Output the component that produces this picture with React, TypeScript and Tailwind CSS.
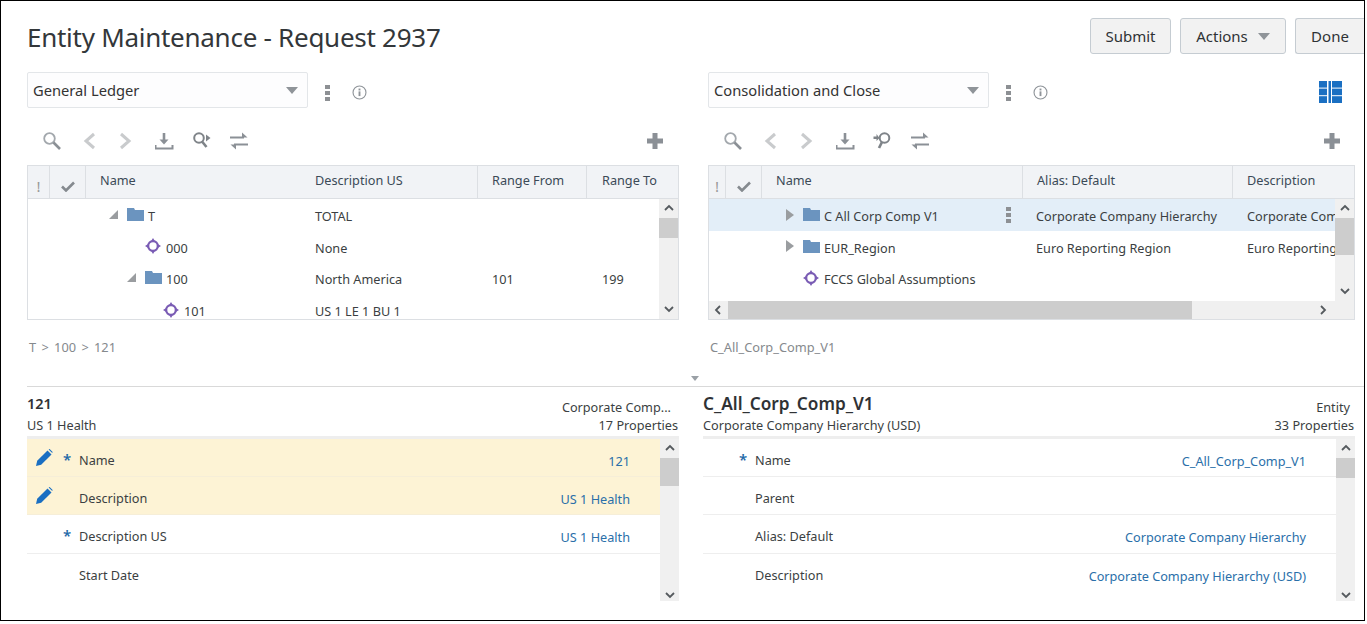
import React from "react";

const G = "#8b9096";

function Search() {
  return (
    <svg width="20" height="20" viewBox="0 0 20 20" fill="none">
      <circle cx="7.5" cy="7.5" r="5.3" stroke="#a3a8ad" strokeWidth="1.8" />
      <path d="M11.5 11.5L18 18" stroke={G} strokeWidth="2.6" />
    </svg>
  );
}
function Chev({ right }: { right?: boolean }) {
  return (
    <svg width="20" height="20" viewBox="0 0 20 20" fill="none">
      <path d={right ? "M4 3l8 7-8 7" : "M14 3l-8 7 8 7"} stroke="#c9cbcd" strokeWidth="3" />
    </svg>
  );
}
function Download() {
  return (
    <svg width="20" height="20" viewBox="0 0 20 20" fill="none">
      <path d="M9 2v8" stroke={G} strokeWidth="2.6" />
      <path d="M4.5 8.5h9L9 13.5z" fill={G} />
      <path d="M0.5 14v3.5h17V14" stroke={G} strokeWidth="2" />
    </svg>
  );
}
function SearchArrow({ flip }: { flip?: boolean }) {
  return (
    <svg width="20" height="20" viewBox="0 0 20 20" fill="none">
      {flip ? (
        <>
          <circle cx="11.5" cy="7" r="4.8" stroke="#7f8489" strokeWidth="2" />
          <path d="M9 11l-3 6" stroke="#7f8489" strokeWidth="2.6" />
          <path d="M0.5 5.5h3V3l3 4-3 3V8h-3z" fill="#7f8489" />
        </>
      ) : (
        <>
          <circle cx="7" cy="7" r="4.8" stroke="#7f8489" strokeWidth="2" />
          <path d="M10 10.5l4.5 5.5" stroke="#7f8489" strokeWidth="2.6" />
          <path d="M14 3.5l4.5 3.5-4.5 3.5z" fill="#7f8489" />
        </>
      )}
    </svg>
  );
}
function Swap() {
  return (
    <svg width="20" height="20" viewBox="0 0 20 20" fill="none">
      <path d="M0 6.5h14" stroke={G} strokeWidth="2" />
      <path d="M12 1.5l5.5 5H12z" fill={G} />
      <path d="M18 13.5H4" stroke={G} strokeWidth="2" />
      <path d="M6 18.5l-5.5-5H6z" fill={G} />
    </svg>
  );
}
function Plus() {
  return (
    <svg width="20" height="20" viewBox="0 0 20 20" fill="none">
      <path d="M10 2v16M2 10h16" stroke={G} strokeWidth="5" />
    </svg>
  );
}
function Kebab() {
  return (
    <svg width="5" height="16" viewBox="0 0 5 16" fill="#8d9094">
      <rect y="0" width="5" height="4" />
      <rect y="6" width="5" height="4" />
      <rect y="12" width="5" height="4" />
    </svg>
  );
}
function Info() {
  return (
    <svg width="15" height="15" viewBox="0 0 16 16" fill="none">
      <circle cx="8" cy="8" r="6.9" stroke="#8f9499" strokeWidth="1.2" />
      <rect x="7" y="6.8" width="2" height="5" fill="#8f9499" />
      <rect x="7" y="3.8" width="2" height="2" fill="#8f9499" />
    </svg>
  );
}
function Columns() {
  return (
    <svg width="23" height="22" viewBox="0 0 23 22" fill="#1a6fc2">
      <rect x="0" y="0" width="8" height="6.6" />
      <rect x="0" y="7.6" width="8" height="6.6" />
      <rect x="0" y="15.2" width="8" height="6.8" />
      <rect x="9.5" y="0" width="2.5" height="22" />
      <rect x="13" y="0" width="10" height="6.6" />
      <rect x="13" y="7.6" width="10" height="6.6" />
      <rect x="13" y="15.2" width="10" height="6.8" />
    </svg>
  );
}
function Check() {
  return (
    <svg width="14" height="11" viewBox="0 0 14 11" fill="none">
      <path d="M1 5.5l4 4 8-8" stroke="#858a8f" strokeWidth="2.6" />
    </svg>
  );
}
function Target() {
  return (
    <svg width="16" height="16" viewBox="0 0 16 16" fill="none">
      <circle cx="8" cy="8" r="4.8" stroke="#7a5cb4" strokeWidth="2.2" />
      <path d="M8 0l2 3.2H6zM8 16l-2-3.2h4zM0 8l3.2-2v4zM16 8l-3.2 2V6z" fill="#7a5cb4" />
    </svg>
  );
}
function Folder() {
  return (
    <svg width="17" height="13" viewBox="0 0 17 13" fill="#6b94bf">
      <path d="M0 0h7l1 2h9v11H0z" />
    </svg>
  );
}
function Open() {
  return (
    <svg width="9" height="9" viewBox="0 0 9 9" fill="#9a9da0">
      <path d="M9 0v9H0z" />
    </svg>
  );
}
function Closed() {
  return (
    <svg width="8" height="12" viewBox="0 0 8 12" fill="#9a9da0">
      <path d="M0 0l8 6-8 6z" />
    </svg>
  );
}
function Pencil() {
  return (
    <svg width="17" height="17" viewBox="0 0 17 17" fill="#1a6fc2">
      <path d="M0 17l1.2-5.2L11.5 1.5l4 4L5.2 15.8z" />
      <path d="M12.6.4l1-.4 3 3-.4 1z" />
    </svg>
  );
}
function Caret({ color = "#8f9499" }: { color?: string }) {
  return (
    <svg width="12" height="7" viewBox="0 0 12 7" fill={color}>
      <path d="M0 0h12L6 7z" />
    </svg>
  );
}
function SmallChev({ dir }: { dir: "up" | "down" | "left" | "right" }) {
  const d = { up: "M1 6l4-4 4 4", down: "M1 2l4 4 4-4", left: "M6 1L2 5l4 4", right: "M3 1l4 4-4 4" }[dir];
  return (
    <svg width="10" height="10" viewBox="0 0 10 10" fill="none">
      <path d={d} stroke="#555a5e" strokeWidth="1.8" />
    </svg>
  );
}

function VBar({ thumb, bottom = 19 }: { thumb: number; bottom?: number }) {
  return (
    <div className="w-[19px] shrink-0 h-full flex flex-col bg-[#f0f0f0]">
      <div className="h-[19px] flex items-center justify-center"><SmallChev dir="up" /></div>
      <div className="bg-[#cdcdcd] w-full" style={{ height: thumb }} />
      <div className="flex-1" />
      <div className="flex items-center justify-center" style={{ height: bottom }}><SmallChev dir="down" /></div>
    </div>
  );
}

function Dropdown({ label }: { label: string }) {
  return (
    <div className="w-[281px] h-[36px] border border-[#e3e6e9] rounded-[2px] bg-[#fdfdfe] flex items-center justify-between pl-[5px] pr-[9px] text-[14.7px] text-[#333]">
      <span>{label}</span>
      <Caret />
    </div>
  );
}

function Toolbar({ flip, pr }: { flip?: boolean; pr: string }) {
  return (
    <div className={`h-[57px] pt-[9px] pl-[15px] flex items-center gap-[17.5px] ${pr}`}>
      <Search />
      <Chev />
      <Chev right />
      <Download />
      <SearchArrow flip={flip} />
      <Swap />
      <div className="ml-auto"><Plus /></div>
    </div>
  );
}

function HeadMarks({ w1 }: { w1: string }) {
  return (
    <>
      <div className={`${w1} shrink-0 border-r border-[#dcdfe3] flex items-center justify-center pt-[9px] text-[15px] text-[#999]`}>!</div>
      <div className="w-[36px] shrink-0 border-r border-[#dcdfe3] flex items-center justify-center pt-[9px]"><Check /></div>
    </>
  );
}

function HeadCell({ w, pl, border = true, children }: { w: string; pl: string; border?: boolean; children: React.ReactNode }) {
  return (
    <div className={`${w} ${pl} pb-[2px] h-full flex items-center overflow-hidden whitespace-nowrap ${border ? "border-r border-[#dcdfe3]" : ""}`}>{children}</div>
  );
}

function LRow({ pl, icon, name, d, a, b }: { pl: string; icon: React.ReactNode; name: string; d: string; a?: string; b?: string }) {
  return (
    <div className="h-[31.6px] flex items-center text-[#3b3f42] whitespace-nowrap">
      <div className={`w-[287px] shrink-0 flex items-center ${pl}`}>{icon}<span className="pt-[4px]">{name}</span></div>
      <div className="w-[177px] shrink-0 pt-[4px]">{d}</div>
      <div className="w-[110px] shrink-0 pt-[4px]">{a}</div>
      <div className="pt-[4px]">{b}</div>
    </div>
  );
}

function RRow({ selected, icon, name, a, d }: { selected?: boolean; icon: React.ReactNode; name: string; a?: string; d?: string }) {
  return (
    <div className={`h-[31.6px] flex items-center text-[#3b3f42] whitespace-nowrap ${selected ? "bg-[#e3eef8]" : ""}`}>
      <div className="w-[327px] shrink-0 flex items-center pl-[77px] pr-[25px]">
        {icon}
        <span className="pt-[4px]">{name}</span>
        {selected && <span className="ml-auto flex"><Kebab /></span>}
      </div>
      <div className="w-[211px] shrink-0 pt-[4px]">{a}</div>
      <div className="flex-1 overflow-hidden pt-[4px]">{d}</div>
    </div>
  );
}

function PropRow({ yellow, pencil, star, label, value }: { yellow?: boolean; pencil?: boolean; star?: boolean; label: string; value?: string }) {
  return (
    <div className={`h-[38.2px] flex items-center border-b whitespace-nowrap ${yellow ? "bg-[#fdf3d5] border-[#f6eed8]" : "border-[#eeeeee]"}`}>
      <div className="w-[36px] shrink-0 pl-[9px] flex items-center">{pencil && <Pencil />}</div>
      <div className="w-[16px] shrink-0 pt-[4px] text-[#1f6aa8] text-[15px] font-semibold leading-none">{star ? "*" : ""}</div>
      <div className="text-[#3b3f42] pt-[6px]">{label}</div>
      <div className="ml-auto pr-[30px] pt-[8px] text-[#2a6fa9]">{value}</div>
    </div>
  );
}

function DetailHead({ title, sub, right, count, big, r }: { title: string; sub: string; right: string; count: string; big?: boolean; r: string }) {
  return (
    <div className="h-[49px] shrink-0 flex justify-between items-start whitespace-nowrap text-[#3b3f42]">
      <div className="pt-[6px]">
        <div className={`font-semibold text-[#2f3235] leading-[21px] ${big ? "text-[17.2px]" : "text-[14.5px]"}`}>{title}</div>
        <div className="leading-[21px] mt-[1px]">{sub}</div>
      </div>
      <div className="text-right pt-[11px]">
        <div className={`leading-[18px] ${r}`}>{right}</div>
        <div className="leading-[18px] pr-[1px]">{count}</div>
      </div>
    </div>
  );
}

export default function App() {
  return (
    <div className="w-[1365px] h-[621px] border border-black bg-white overflow-hidden text-[12.7px]" style={{ fontFamily: '"Noto Sans", "Open Sans", sans-serif' }}>
      <div className="h-[71px] shrink-0 flex items-start justify-between pl-[26px] pt-[17px]">
        <h1 className="text-[26px] leading-[38px] tracking-[-0.27px] text-[#33373a] whitespace-nowrap">Entity Maintenance - Request 2937</h1>
        <div className="flex gap-[9px] text-[15px] text-[#2f3235]">
          <button className="w-[81px] h-[36px] border border-[#c5ccd2] rounded-[3px] bg-[#f2f2f2]">Submit</button>
          <button className="w-[106px] h-[36px] border border-[#c5ccd2] rounded-[3px] bg-[#f2f2f2] flex items-center justify-center gap-[10px]">Actions <Caret /></button>
          <button className="w-[69px] h-[36px] border border-r-0 border-[#c5ccd2] rounded-l-[3px] bg-[#f2f2f2]">Done</button>
        </div>
      </div>

      <div className="flex pl-[26px] gap-[29px] h-[248px]">
        <div className="w-[652px] shrink-0">
          <div className="flex items-center">
            <Dropdown label="General Ledger" />
            <span className="ml-[17px] mt-[5px] flex"><Kebab /></span>
            <span className="ml-[22px] mt-[4px] flex"><Info /></span>
          </div>
          <Toolbar pr="pr-[14px]" />
          <div className="h-[155px] border border-[#dcdfe3] flex flex-col">
            <div className="h-[33px] shrink-0 bg-[#f1f3f6] border-b border-[#dcdfe3] flex text-[#3b4a57]">
              <HeadMarks w1="w-[22px]" />
              <HeadCell w="w-[218px]" pl="pl-[14px]" border={false}>Name</HeadCell>
              <HeadCell w="w-[174px]" pl="pl-[11px]">Description US</HeadCell>
              <HeadCell w="w-[109px]" pl="pl-[14px]">Range From</HeadCell>
              <HeadCell w="flex-1" pl="pl-[15px]" border={false}>Range To</HeadCell>
            </div>
            <div className="flex-1 flex overflow-hidden">
              <div className="flex-1 overflow-hidden">
                <LRow pl="pl-[81px]" icon={<><Open /><span className="w-[9px]" /><Folder /><span className="w-[4px]" /></>} name="T" d="TOTAL" />
                <LRow pl="pl-[117px]" icon={<><Target /><span className="w-[5px]" /></>} name="000" d="None" />
                <LRow pl="pl-[99px]" icon={<><Open /><span className="w-[9px]" /><Folder /><span className="w-[4px]" /></>} name="100" d="North America" a="101" b="199" />
                <LRow pl="pl-[135px]" icon={<><Target /><span className="w-[5px]" /></>} name="101" d="US 1 LE 1 BU 1" />
              </div>
              <VBar thumb={20} />
            </div>
          </div>
        </div>

        <div className="w-[647px] shrink-0">
          <div className="flex items-center">
            <Dropdown label="Consolidation and Close" />
            <span className="ml-[17px] mt-[5px] flex"><Kebab /></span>
            <span className="ml-[22px] mt-[4px] flex"><Info /></span>
            <span className="ml-auto mr-[13px] mt-[3px] flex"><Columns /></span>
          </div>
          <Toolbar flip pr="pr-[13px]" />
          <div className="h-[155px] border border-[#dcdfe3] flex flex-col">
            <div className="h-[33px] shrink-0 bg-[#f1f3f6] border-b border-[#dcdfe3] flex text-[#3b4a57]">
              <HeadMarks w1="w-[17px]" />
              <HeadCell w="w-[261px]" pl="pl-[14px]">Name</HeadCell>
              <HeadCell w="w-[210px]" pl="pl-[14px]">Alias: Default</HeadCell>
              <HeadCell w="flex-1" pl="pl-[14px]" border={false}>Description</HeadCell>
            </div>
            <div className="flex-1 flex overflow-hidden">
              <div className="flex-1 overflow-hidden">
                <RRow selected icon={<><Closed /><span className="w-[9px]" /><Folder /><span className="w-[4px]" /></>} name="C All Corp Comp V1" a="Corporate Company Hierarchy" d="Corporate Company Hierarchy" />
                <RRow icon={<><Closed /><span className="w-[9px]" /><Folder /><span className="w-[4px]" /></>} name="EUR_Region" a="Euro Reporting Region" d="Euro Reporting Region" />
                <RRow icon={<><span className="w-[17px]" /><Target /><span className="w-[5px]" /></>} name="FCCS Global Assumptions" />
              </div>
              <VBar thumb={37} />
            </div>
            <div className="h-[18px] shrink-0 bg-[#f0f0f0] flex">
              <div className="w-[19px] flex items-center justify-center"><SmallChev dir="left" /></div>
              <div className="w-[464px] bg-[#cdcdcd]" />
              <div className="ml-auto w-[36px] flex items-center"><SmallChev dir="right" /></div>
            </div>
          </div>
        </div>
      </div>

      <div className="flex pl-[26px] gap-[29px] h-[66px]">
        <div className="w-[652px] pt-[18px] pl-[2px] text-[12.8px] text-[#85898d] [word-spacing:2px]">T &gt; 100 &gt; 121</div>
        <div className="pt-[18px] pl-[2px] text-[12.8px] text-[#85898d]">C_All_Corp_Comp_V1</div>
      </div>

      <div className="ml-[26px] border-b border-[#d9d9d9] h-0 relative">
        <span className="absolute left-[664px] -top-[10px] flex"><svg width="8" height="5" viewBox="0 0 8 5" fill="#9aa0a6"><path d="M0 0h8L4 5z" /></svg></span>
      </div>

      <div className="flex pl-[26px] gap-[24px]">
        <div className="w-[652px] shrink-0">
          <DetailHead title="121" sub="US 1 Health" right="Corporate Comp..." count="17 Properties" r="pr-[8px]" />
          <div className="h-[3px] bg-[#eeeeee]" />
          <div className="h-[162px] flex">
            <div className="flex-1 overflow-hidden">
              <PropRow yellow pencil star label="Name" value="121" />
              <PropRow yellow pencil label="Description" value="US 1 Health" />
              <PropRow star label="Description US" value="US 1 Health" />
              <div className="h-[38px] flex items-center pl-[52px] pt-[5px] text-[#3b3f42]">Start Date</div>
            </div>
            <VBar thumb={28} bottom={11} />
          </div>
        </div>
        <div className="w-[652px] shrink-0">
          <DetailHead big title="C_All_Corp_Comp_V1" sub="Corporate Company Hierarchy (USD)" right="Entity" count="33 Properties" r="pr-[5px]" />
          <div className="h-[3px] bg-[#eeeeee]" />
          <div className="h-[162px] flex">
            <div className="flex-1 overflow-hidden">
              <PropRow star label="Name" value="C_All_Corp_Comp_V1" />
              <PropRow label="Parent" />
              <PropRow label="Alias: Default" value="Corporate Company Hierarchy" />
              <div className="h-[38px] flex items-center pl-[52px] pt-[5px] text-[#3b3f42]">Description<span className="ml-auto pr-[30px] pt-[2px] text-[#2a6fa9]">Corporate Company Hierarchy (USD)</span></div>
            </div>
            <VBar thumb={20} bottom={11} />
          </div>
        </div>
      </div>
    </div>
  );
}
